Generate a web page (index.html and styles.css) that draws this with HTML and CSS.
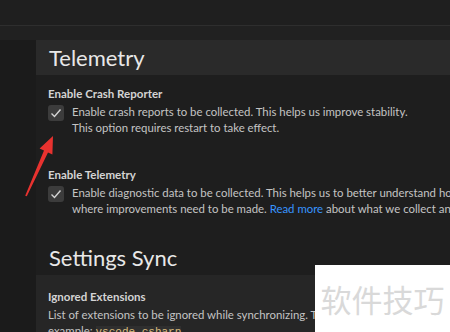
FILE: index.html
```html
<!DOCTYPE html>
<html>
<head>
<meta charset="utf-8">
<link rel="stylesheet" href="styles.css">
</head>
<body>
<div class="topbar"></div>
<div class="subbar"></div>
<div class="main">
  <div class="sidebar"></div>
  <div class="content">
    <div class="section-header"><h2>Telemetry</h2></div>
    <div class="setting first">
      <div class="label">Enable Crash Reporter</div>
      <div class="row">
        <div class="checkbox"><svg viewBox="0 0 16 16" width="16" height="16"><path d="M3.5 8.5 L6.5 11.5 L12.5 4.5" fill="none" stroke="#d4d4d4" stroke-width="1.4"/></svg></div>
        <div class="desc">
          <div class="line">Enable crash reports to be collected. This helps us improve stability.</div>
          <div class="line">This option requires restart to take effect.</div>
        </div>
      </div>
    </div>
    <div class="setting">
      <div class="label">Enable Telemetry</div>
      <div class="row">
        <div class="checkbox"><svg viewBox="0 0 16 16" width="16" height="16"><path d="M3.5 8.5 L6.5 11.5 L12.5 4.5" fill="none" stroke="#d4d4d4" stroke-width="1.4"/></svg></div>
        <div class="desc">
          <div class="line">Enable diagnostic data to be collected. This helps us to better understand how Visual Studio Code is performing and</div>
          <div class="line">where improvements need to be made. <span class="link">Read more</span> about what we collect and our privacy statement.</div>
        </div>
      </div>
    </div>
    <div class="plain-header"><h2>Settings Sync</h2></div>
    <div class="setting hover">
      <div class="label">Ignored Extensions</div>
      <div class="desc">
        <div class="line">List of extensions to be ignored while synchronizing. The identifier of an extension is always</div>
        <div class="line">example: <code>vscode.csharp</code>.</div>
      </div>
    </div>
  </div>
</div>
<div class="watermark">软件技巧</div>
<svg class="arrow" width="40" height="70" viewBox="0 0 40 70">
  <polygon points="33,6 32.4,24.4 28,22.4 6.8,66.3 5.2,65.7 24,20.6 19.6,18.6" fill="#e8322f"/>
</svg>
</body>
</html>
```

FILE: styles.css
```css
html, body {
  margin: 0;
  padding: 0;
}
body {
  width: 450px;
  height: 332px;
  overflow: hidden;
  background: #1e1e1e;
  font-family: Lato, "Liberation Sans", sans-serif;
  color: #cccccc;
  position: relative;
}
.topbar {
  height: 25px;
  background: #1f1f1f;
  border-bottom: 1px solid #2e2e2e;
}
.subbar {
  height: 14px;
  background: #212121;
}
.main {
  display: flex;
}
.sidebar {
  width: 36px;
  flex: none;
  background: #1b1b1b;
  height: 300px;
}
.content {
  flex: 1;
  min-width: 0;
}
h2 {
  margin: 0;
  font-weight: 400;
  font-size: 22px;
  color: #e8e8e8;
  line-height: 35px;
}
.section-header {
  background: #2a2a2a;
  height: 35px;
  padding-left: 13px;
}
.plain-header {
  height: 35px;
  padding-left: 13px;
  margin-top: 23px;
}
.setting {
  padding: 11px 0 0 12px;
  margin-top: 20px;
}
.setting.first {
  margin-top: 0;
}
.setting.hover {
  margin-top: 0;
  background: #262626;
  padding-top: 14px;
  height: 60px;
}
.label {
  font-weight: 700;
  font-size: 11.5px;
  line-height: 16px;
  color: #d4d4d4;
  height: 16px;
  margin-bottom: 2px;
}
.row {
  display: flex;
  gap: 8px;
}
.checkbox {
  width: 16px;
  height: 16px;
  flex: none;
  background: #3c3c3c;
  border-radius: 3px;
  margin-top: 1px;
}
.checkbox svg {
  display: block;
}
.desc {
  font-size: 11.4px;
  line-height: 16px;
  color: #c4c4c4;
  white-space: nowrap;
}
.link {
  color: #3794ff;
}
code {
  font-family: "Liberation Mono", monospace;
  font-size: 11px;
  color: #d7ba7d;
  background: #2f2f2f;
}
.watermark {
  position: absolute;
  left: 315px;
  top: 265px;
  width: 135px;
  height: 67px;
  background: #ffffff;
  color: #d9d9d9;
  font-family: "Noto Sans CJK SC", sans-serif;
  font-size: 31px;
  line-height: 67px;
  text-align: center;
  letter-spacing: 0;
}
.arrow {
  position: absolute;
  left: 20px;
  top: 130px;
}
```
